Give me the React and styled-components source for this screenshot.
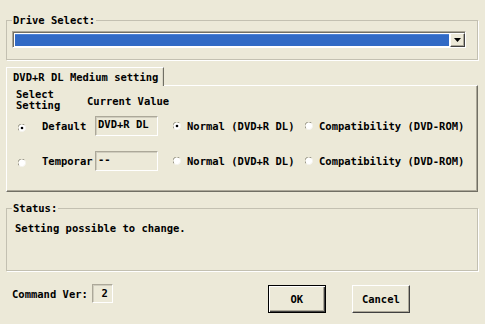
import React from "react";
import styled, { createGlobalStyle } from "styled-components";

const GlobalStyle = createGlobalStyle`
  html, body {
    margin: 0;
    padding: 0;
    background: #ece9d8;
  }
  body {
    font-family: "DejaVu Sans Mono", "Liberation Mono", monospace;
    font-weight: bold;
    font-size: 10.5px;
    line-height: 12px;
    color: #000;
  }
`;

const Dialog = styled.div`
  width: 485px;
  height: 324px;
  box-sizing: border-box;
  padding: 14px 7px 0 6px;
  display: flex;
  flex-direction: column;
`;

const Group = styled.fieldset`
  margin: ${({ $mt }) => $mt || 0}px 0 0 0;
  padding: ${({ $pad }) => $pad};
  min-width: 0;
  border: 1px solid #c3c0b1;
  box-shadow: 1px 1px 0 #fff;
  ${({ $h }) => ($h ? `height: ${$h}px; box-sizing: border-box;` : "")}
`;

const Legend = styled.legend`
  padding: 0 1px;
  line-height: 12px;
`;

const Combo = styled.div`
  display: flex;
  height: 17px;
  box-sizing: border-box;
  border: 1px solid;
  border-color: #aca899 #fff #fff #aca899;
  box-shadow: inset 1px 1px 0 #716f64;
  padding: 1px 0 0 1px;
  background: #fff;
`;

const ComboField = styled.div`
  flex: 1;
  margin: 1px 1px 1px 1px;
  background: #316ac5;
  border-top: 1px solid #4b82d8;
`;

const ComboButton = styled.div`
  width: 15px;
  box-sizing: border-box;
  background: #ece9d8;
  border: 1px solid;
  border-color: #fff #404040 #404040 #fff;
  box-shadow: inset -1px -1px 0 #aca899;
  display: flex;
  align-items: center;
  justify-content: center;
`;

const Tabs = styled.div`
  margin-top: 7px;
  display: flex;
`;

const Tab = styled.div`
  position: relative;
  z-index: 1;
  width: 158px;
  height: 19px;
  box-sizing: border-box;
  margin-bottom: -1px;
  padding: 3px 0 0 6px;
  background: #ece9d8;
  border-top: 1px solid #fff;
  border-left: 1px solid #fff;
  border-right: 1px solid #716f64;
  box-shadow: inset -1px 0 0 #d8d5c6;
`;

const Panel = styled.div`
  height: 107px;
  box-sizing: border-box;
  border: 1px solid;
  border-color: #fff #716f64 #716f64 #fff;
  box-shadow: inset -1px -1px 0 #aca899;
  padding: 3px 0 0 9px;
`;

const HeadRow = styled.div`
  display: flex;
  align-items: center;
  line-height: 11px;
`;

const HeadCell = styled.div`
  width: ${({ $w }) => ($w ? `${$w}px` : "auto")};
  padding-top: ${({ $pt }) => $pt || 0}px;
`;

const SettingRow = styled.div`
  display: grid;
  grid-template-columns: 26px 53px 63px 147px auto;
  align-items: center;
  height: 20px;
  margin-top: ${({ $mt }) => $mt}px;
`;

const RadioCell = styled.div`
  display: flex;
  padding-left: 2px;
  padding-top: 3px;
`;

const ValueBox = styled.div`
  height: 20px;
  box-sizing: border-box;
  border: 1px solid;
  border-color: #aca899 #fff #fff #aca899;
  box-shadow: inset 1px 1px 0 #d0cdbe;
  padding: 1px 0 0 2px;
  white-space: nowrap;
`;

const Option = styled.label`
  display: flex;
  align-items: center;
  gap: 6px;
  padding-left: ${({ $pl }) => $pl || 0}px;
  white-space: nowrap;
`;

const StatusText = styled.div`
  margin-left: 3px;
`;

const Footer = styled.div`
  display: flex;
  align-items: flex-start;
  padding-left: 6px;
`;

const CmdLabel = styled.div`
  margin-top: 17px;
`;

const CmdBox = styled.div`
  margin: 13px 0 0 4px;
  width: 21px;
  height: 19px;
  box-sizing: border-box;
  border: 1px solid;
  border-color: #aca899 #fff #fff #aca899;
  box-shadow: inset 1px 1px 0 #d0cdbe;
  text-align: right;
  padding: 2px 4px 0 0;
`;

const Buttons = styled.div`
  display: flex;
  gap: 26px;
  margin: 14px 0 0 155px;
`;

const Button = styled.button`
  width: 58px;
  height: 28px;
  padding: 0;
  font: inherit;
  color: #000;
  background: #ece9d8;
  border: 1px solid;
  border-color: ${({ $default }) =>
    $default ? "#000" : "#fff #404040 #404040 #fff"};
  box-shadow: ${({ $default }) =>
    $default
      ? "inset 1px 1px 0 #fff, inset -1px -1px 0 #404040, inset -2px -2px 0 #aca899"
      : "inset -1px -1px 0 #aca899"};
`;

const Radio = ({ checked }) => (
  <svg width="8" height="8" viewBox="0 0 8 8">
    <circle cx="4" cy="4" r="3.5" fill="#fff" />
    <path d="M1 6.5 A3.5 3.5 0 0 1 6.5 1" fill="none" stroke="#9d9a8c" strokeWidth="1" />
    <path d="M6.5 1 A3.5 3.5 0 0 1 1 6.5" fill="none" stroke="#f4f3ee" strokeWidth="1" />
    {checked && <circle cx="4" cy="4" r="1.3" fill="#000" />}
  </svg>
);

const rows = [
  { label: "Default", value: "DVD+R DL", selected: true, mode: 0, mt: 5 },
  { label: "Temporar", value: "--", selected: false, mode: -1, mt: 15 },
];

export default function App() {
  return (
    <>
      <GlobalStyle />
      <Dialog>
        <Group $pad="5px 11px 11px 5px">
          <Legend>Drive Select:</Legend>
          <Combo>
            <ComboField />
            <ComboButton>
              <svg width="7" height="4" viewBox="0 0 7 4">
                <path d="M0 0h7L3.5 4z" fill="#000" />
              </svg>
            </ComboButton>
          </Combo>
        </Group>

        <Tabs>
          <Tab>DVD+R DL Medium setting</Tab>
        </Tabs>
        <Panel>
          <HeadRow>
            <HeadCell $w={71}>
              Select
              <br />
              Setting
            </HeadCell>
            <HeadCell $pt={2}>Current Value</HeadCell>
          </HeadRow>
          {rows.map((r) => (
            <SettingRow key={r.label} $mt={r.mt}>
              <RadioCell>
                <Radio checked={r.selected} />
              </RadioCell>
              <div>{r.label}</div>
              <ValueBox>{r.value}</ValueBox>
              <Option $pl={15}>
                <Radio checked={r.mode === 0} />
                Normal (DVD+R DL)
              </Option>
              <Option>
                <Radio checked={r.mode === 1} />
                Compatibility (DVD-ROM)
              </Option>
            </SettingRow>
          ))}
        </Panel>

        <Group $mt={10} $pad="8px 5px 0 5px" $h={69}>
          <Legend>Status:</Legend>
          <StatusText>Setting possible to change.</StatusText>
        </Group>

        <Footer>
          <CmdLabel>Command Ver:</CmdLabel>
          <CmdBox>2</CmdBox>
          <Buttons>
            <Button $default>OK</Button>
            <Button>Cancel</Button>
          </Buttons>
        </Footer>
      </Dialog>
    </>
  );
}
